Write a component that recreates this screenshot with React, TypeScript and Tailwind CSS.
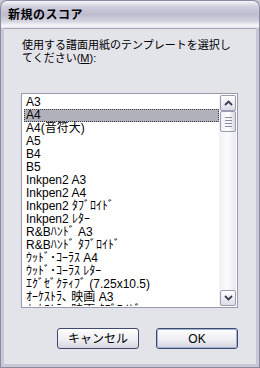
import React from 'react'

const FONT = '"Liberation Sans", "Noto Sans CJK JP", sans-serif'

const items = [
  'A3',
  'A4',
  'A4(音符大)',
  'A5',
  'B4',
  'B5',
  'Inkpen2  A3',
  'Inkpen2  A4',
  'Inkpen2  ﾀﾌﾞﾛｲﾄﾞ',
  'Inkpen2  ﾚﾀｰ',
  'R&Bﾊﾝﾄﾞ A3',
  'R&Bﾊﾝﾄﾞ ﾀﾌﾞﾛｲﾄﾞ',
  'ｳｯﾄﾞ･ｺｰﾗｽ A4',
  'ｳｯﾄﾞ･ｺｰﾗｽ ﾚﾀｰ',
  'ｴｸﾞｾﾞｸﾃｨﾌﾞ (7.25x10.5)',
  'ｵｰｹｽﾄﾗ､ 映画 A3',
  'ｵｰｹｽﾄﾗ､ 映画 ﾀﾌﾞﾛｲﾄﾞ',
]

function Chevron({ down }: { down?: boolean }) {
  return (
    <svg width="9" height="6" viewBox="0 0 9 6">
      <path
        d={down ? 'M1 1 L4.5 4.5 L8 1' : 'M1 5 L4.5 1.5 L8 5'}
        fill="none"
        stroke="#3c3c50"
        strokeWidth="1.8"
      />
    </svg>
  )
}

function ScrollButton({ down }: { down?: boolean }) {
  return (
    <div className="h-[16px] w-[16px] rounded-[2px] border border-[#9c9cb0] bg-[linear-gradient(to_bottom,#ffffff,#dcdce6)] flex items-center justify-center">
      <Chevron down={down} />
    </div>
  )
}

function Scrollbar() {
  return (
    <div className="w-[17px] flex flex-col bg-[linear-gradient(to_right,#f0f0f5,#fbfbfd_50%,#e8e8f0)] pl-[1px]">
      <ScrollButton />
      <div className="h-[21px] w-[16px] rounded-[2px] border border-[#9c9cb0] bg-[linear-gradient(to_right,#eeeef4,#ffffff_50%,#d8d8e2)] flex flex-col items-center justify-center gap-[2px]">
        <div className="h-px w-[7px] bg-[#8c8ca4]" />
        <div className="h-px w-[7px] bg-[#8c8ca4]" />
        <div className="h-px w-[7px] bg-[#8c8ca4]" />
        <div className="h-px w-[7px] bg-[#8c8ca4]" />
      </div>
      <div className="flex-1" />
      <ScrollButton down />
    </div>
  )
}

function Button({ label, isDefault }: { label: string; isDefault?: boolean }) {
  return (
    <button
      className="h-[21px] w-[82px] rounded-[3px] border border-[#3f4a6a] bg-[linear-gradient(to_bottom,#ffffff,#ececf2_60%,#d4d4de)] text-[12px] text-black flex items-center justify-center"
      style={{ fontFamily: FONT }}
    >
      <span
        className={
          isDefault
            ? 'h-full w-full rounded-[2px] border border-[#9eb4dc] flex items-center justify-center'
            : 'h-full w-full flex items-center justify-center'
        }
      >
        {label}
      </span>
    </button>
  )
}

export default function App() {
  return (
    <div
      className="w-[260px] h-[368px] flex flex-col bg-[#c8c8d4] text-black"
      style={{ fontFamily: FONT }}
    >
      {/* Title bar */}
      <div className="h-[28px] rounded-t-[7px] border border-b-0 border-[#8a8aa0] bg-[linear-gradient(to_bottom,#f6f6fa_0%,#d0d0de_20%,#bcbcce_50%,#d4d4e0_75%,#f8f8fb_92%,#e0e0ea_100%)] flex items-center px-[7px]">
        <span className="text-[12px] font-bold tracking-[0.5px]">新規のスコア</span>
      </div>

      {/* Body */}
      <div className="flex-1 flex flex-col border-x border-b border-[#8a8aa0] bg-[#c8c8d4] px-[3px] pb-[3px]">
        <div className="flex-1 flex flex-col bg-[#e3e3ea] border-t border-[#a8a8b8] pt-[10px]">
          <p className="pl-[18px] text-[11px] leading-[13px]">
            使用する譜面用紙のテンプレートを選択し
            <br />
            てください(<span className="underline">M</span>):
          </p>

          {/* List box */}
          <div className="mt-[28px] ml-[17px] w-[217px] h-[215px] border border-[#9a9aac] bg-white flex p-px">
            <div className="flex-1 overflow-hidden pt-[1px] pl-px">
              {items.map((item, i) => (
                <div
                  key={item}
                  className={
                    i === 1
                      ? 'h-[13px] leading-[13px] text-[12px] px-[2px] whitespace-nowrap bg-[#b1b1bb] outline-1 outline-dotted outline-[#404040] -outline-offset-1'
                      : 'h-[13px] leading-[13px] text-[12px] px-[2px] whitespace-nowrap'
                  }
                >
                  {item}
                </div>
              ))}
            </div>
            <Scrollbar />
          </div>

          {/* Buttons */}
          <div className="mt-[20px] flex justify-end gap-[17px] pr-[18px]">
            <Button label="キャンセル" />
            <Button label="OK" isDefault />
          </div>
        </div>
      </div>
    </div>
  )
}
